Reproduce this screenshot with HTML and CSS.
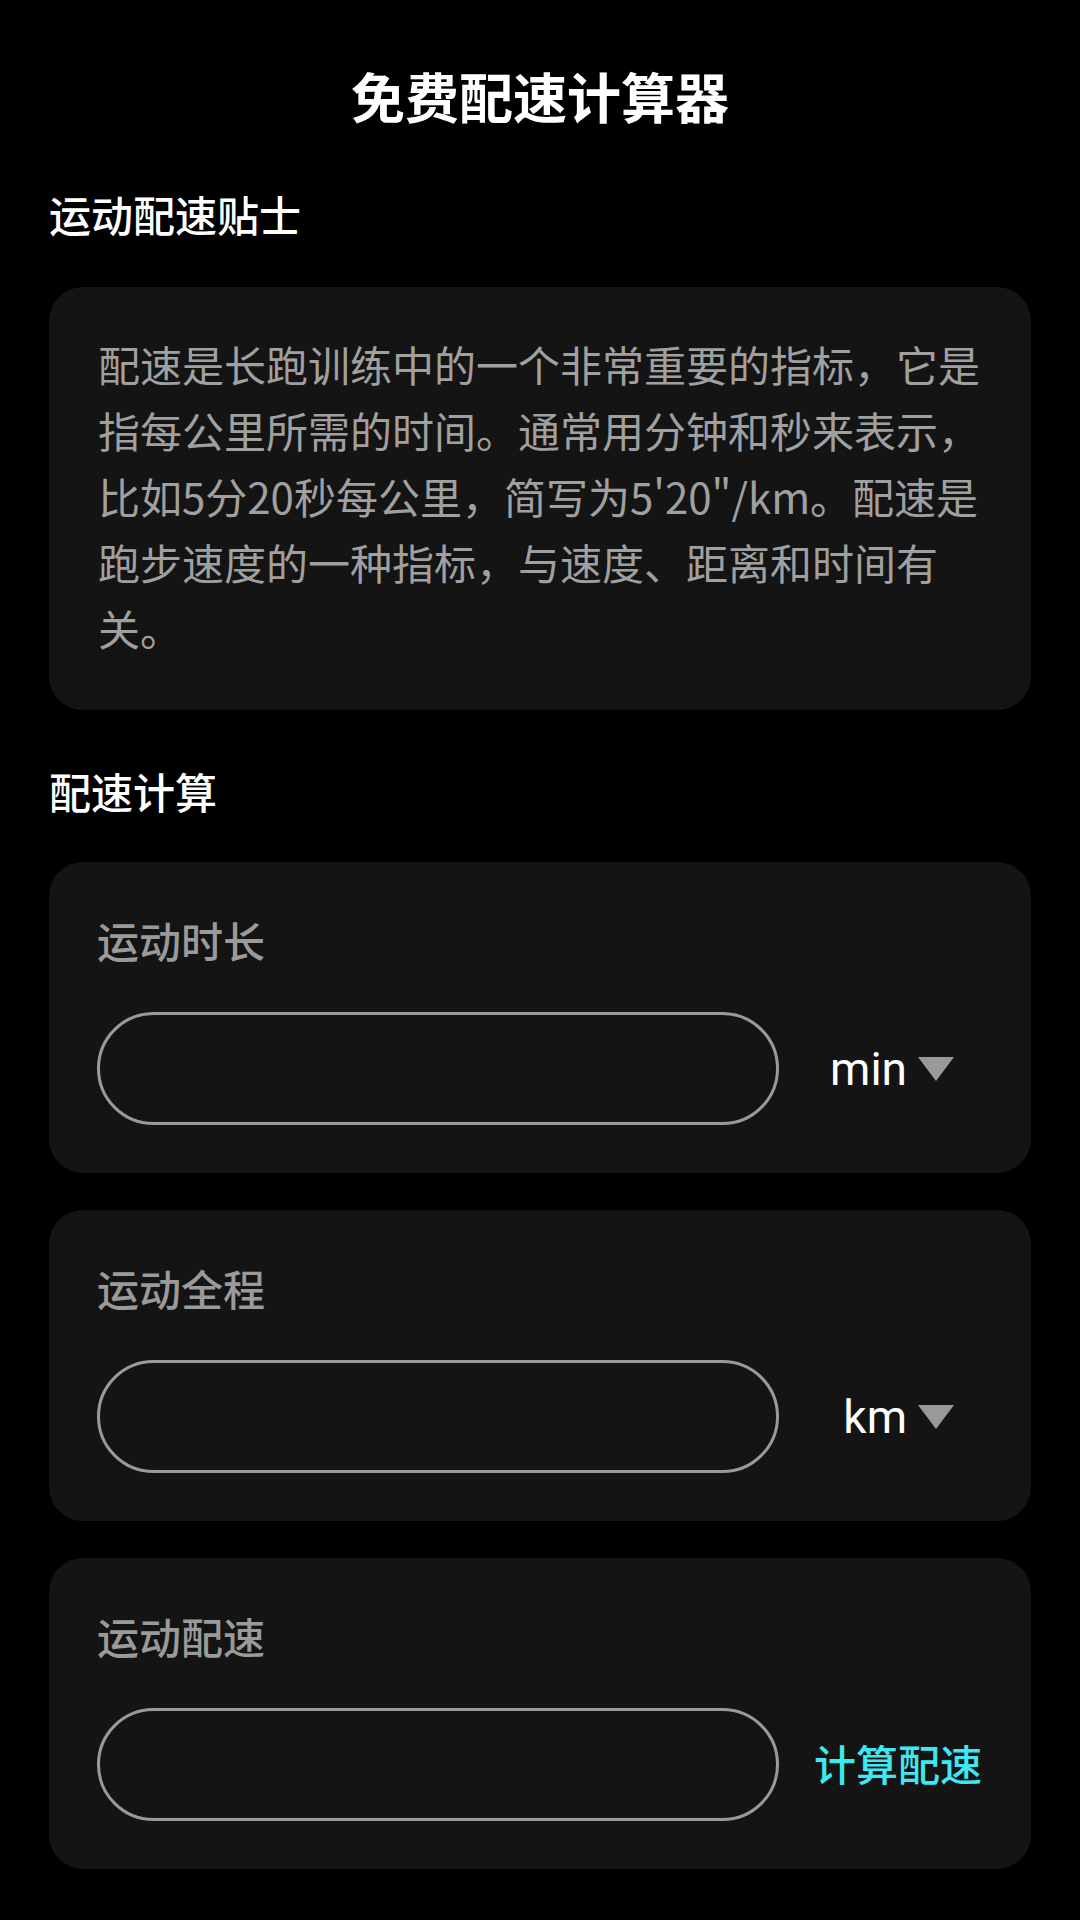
FILE: index.html
```html
<!DOCTYPE html>
<html lang="zh-CN">
<head>
<meta charset="utf-8">
<title>免费配速计算器</title>
<link rel="stylesheet" href="styles.css">
</head>
<body>
<main class="page">
  <h1 class="title">免费配速计算器</h1>

  <h2 class="section-title section-title-first">运动配速贴士</h2>
  <div class="card tip-card">
    <p class="tip-text">配速是长跑训练中的一个非常重要的指标，它是指每公里所需的时间。通常用分钟和秒来表示，比如5分20秒每公里，简写为5'20"/km。配速是跑步速度的一种指标，与速度、距离和时间有关。</p>
  </div>

  <h2 class="section-title">配速计算</h2>
  <div class="calc-list">
    <div class="card field-card">
      <div class="field-label">运动时长</div>
      <div class="field-row">
        <input class="field-input" type="text">
        <div class="field-side">
          <span class="unit">min</span><span class="arrow"></span>
        </div>
      </div>
    </div>
    <div class="card field-card">
      <div class="field-label">运动全程</div>
      <div class="field-row">
        <input class="field-input" type="text">
        <div class="field-side">
          <span class="unit">km</span><span class="arrow"></span>
        </div>
      </div>
    </div>
    <div class="card field-card">
      <div class="field-label">运动配速</div>
      <div class="field-row">
        <input class="field-input" type="text">
        <div class="field-side field-side-action">
          <span class="action">计算配速</span>
        </div>
      </div>
    </div>
  </div>
</main>
</body>
</html>
```

FILE: styles.css
```css
html, body {
  margin: 0;
  padding: 0;
  background: #000;
}

body {
  font-family: "Noto Sans CJK SC", "Noto Sans", sans-serif;
  color: #fff;
}

.page {
  padding: 61px 49px 0;
  display: flex;
  flex-direction: column;
}

.title {
  margin: 0;
  font-size: 54px;
  line-height: 70px;
  font-weight: 700;
  text-align: center;
  color: #fff;
}

.section-title {
  margin: 53px 0 43px;
  font-size: 42px;
  line-height: 56px;
  font-weight: 500;
  color: #fff;
}

.section-title-first {
  margin-top: 55px;
  margin-bottom: 45px;
}

.card {
  background: #141414;
  border-radius: 34px;
}

.tip-card {
  padding: 44px 46px 49px 49px;
}

.tip-text {
  margin: 0;
  font-size: 42px;
  line-height: 66px;
  font-weight: 400;
  color: #a0a0a0;
  line-break: strict;
}

.calc-list {
  display: flex;
  flex-direction: column;
  gap: 37px;
}

.field-card {
  padding: 50px 49px 48px 48px;
}

.field-label {
  font-size: 42px;
  line-height: 56px;
  font-weight: 500;
  color: #9a9a9a;
}

.field-row {
  margin-top: 44px;
  display: flex;
  align-items: center;
}

.field-input {
  box-sizing: border-box;
  width: 682px;
  height: 113px;
  flex: none;
  margin: 0;
  padding: 0 40px;
  border: 3px solid #9a9a9a;
  border-radius: 57px;
  background: transparent;
  color: #fff;
  font-size: 42px;
  outline: none;
}

.field-side {
  flex: 1;
  display: flex;
  align-items: center;
  justify-content: flex-end;
  padding-right: 28px;
}

.field-side-action {
  padding-right: 0;
}

.unit {
  font-family: Roboto, "Noto Sans", sans-serif;
  font-size: 46px;
  line-height: 56px;
  color: #fff;
}

.arrow {
  width: 0;
  height: 0;
  margin-left: 11px;
  border-left: 18px solid transparent;
  border-right: 18px solid transparent;
  border-top: 24px solid #999;
}

.action {
  font-size: 42px;
  line-height: 56px;
  font-weight: 500;
  color: #3ee8f2;
  margin-top: -4px;
}
```
